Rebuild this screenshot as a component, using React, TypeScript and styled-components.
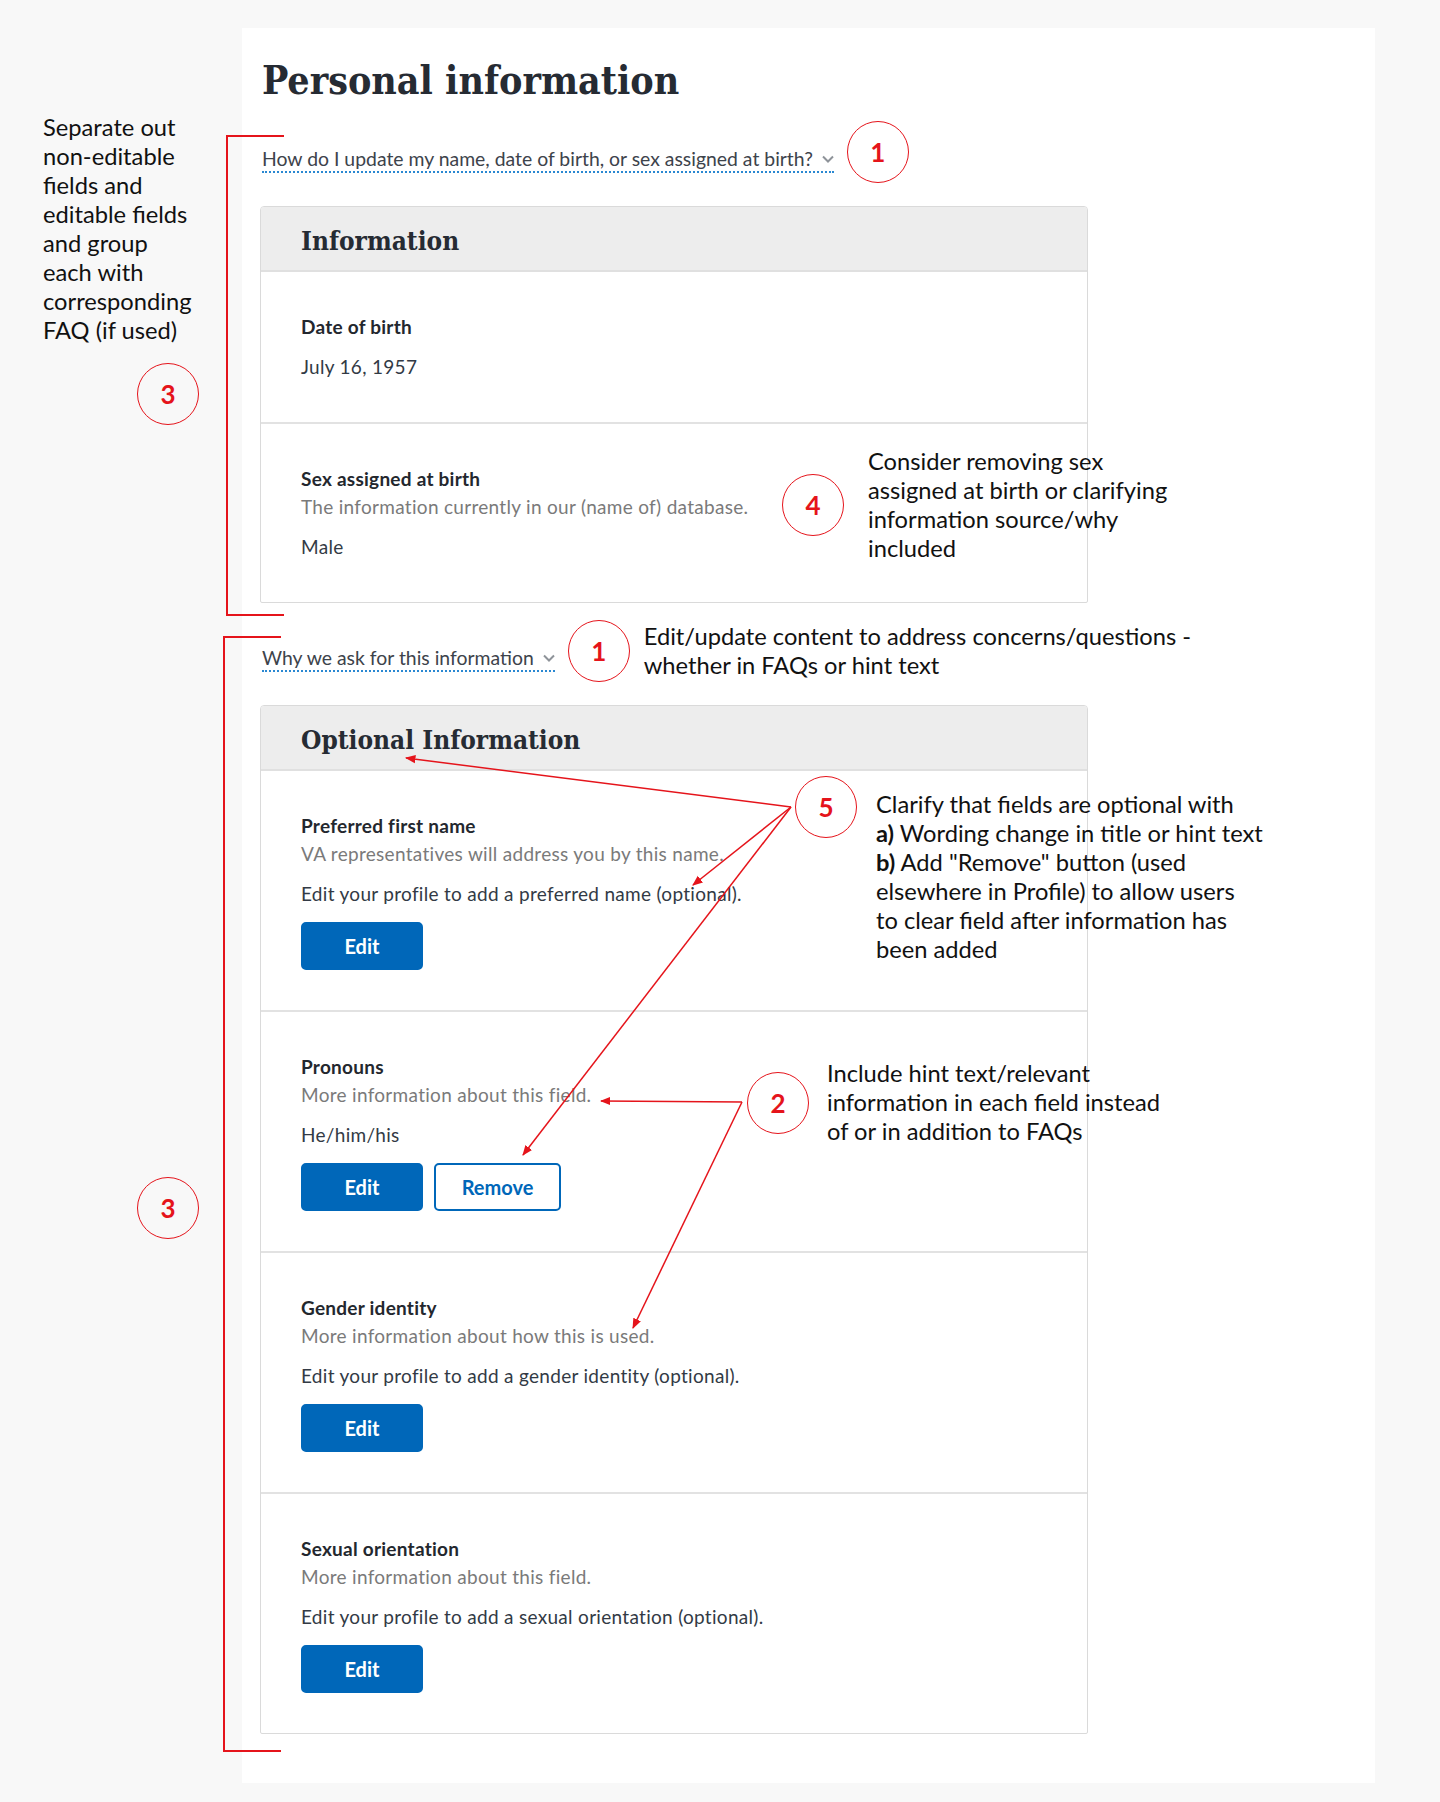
import React from "react";
import styled, { createGlobalStyle } from "styled-components";

const RED = "#e5141b";
const BLUE = "#0067b9";

const GlobalStyle = createGlobalStyle`
  html, body { margin: 0; padding: 0; background: #f8f8f8; }
  body { font-family: Lato, "Liberation Sans", sans-serif; -webkit-font-smoothing: antialiased; }
  * { box-sizing: border-box; }
`;

const Page = styled.div`
  position: relative;
  width: 1440px;
  height: 1802px;
  display: flex;
  align-items: flex-start;
  background: #f8f8f8;
  overflow: hidden;
`;

/* ---------- left margin notes ---------- */

const SideNote = styled.aside`
  width: 242px;
  display: flex;
  flex-direction: column;
  align-items: flex-start;
  padding: 113px 0 0 43px;
`;

const NoteText = styled.p`
  margin: 0;
  font: 400 23.7px/29px Lato, sans-serif;
  color: #111;
  white-space: nowrap;
  strong {
    font-weight: 700;
  }
`;

const Marker = styled.span<{ $offset?: number }>`
  flex: none;
  width: 62px;
  height: 62px;
  margin-top: ${(p) => p.$offset ?? 0}px;
  border: 1.5px solid ${RED};
  border-radius: 50%;
  display: flex;
  align-items: center;
  justify-content: center;
  font: 700 26px/1 Lato, sans-serif;
  color: ${RED};
`;

const SideMarker = styled(Marker)`
  margin-left: 94px;
`;

/* ---------- the page under review ---------- */

const Panel = styled.main`
  width: 1133px;
  height: 1755px;
  margin-top: 28px;
  background: #fff;
  padding: 28px 0 0 18px;
  display: flex;
  flex-direction: column;
  align-items: flex-start;
`;

const Title = styled.h1`
  margin: 0 0 0 2px;
  font-family: "DejaVu Serif Condensed", "DejaVu Serif", serif;
  font-stretch: condensed;
  font-weight: 700;
  font-size: 39px;
  line-height: 48px;
  color: #262b33;
`;

const DisclosureRow = styled.div`
  display: flex;
  align-items: flex-end;
  gap: 13px;
  margin: 17px 0 23px 2px;
`;

const Disclosure = styled.button`
  display: flex;
  align-items: center;
  gap: 9px;
  margin-bottom: 10px;
  padding: 0;
  border: 0;
  border-bottom: 2px dotted #2a88d2;
  background: none;
  font: 400 19.4px/24px Lato, sans-serif;
  color: #3d434b;
  cursor: pointer;
`;

const InlineNote = styled.div`
  display: flex;
  align-items: center;
  gap: 14px;
`;

const Chevron = () => (
  <svg width="12" height="8" viewBox="0 0 12 8" aria-hidden="true">
    <path d="M1 1.5 L6 6.5 L11 1.5" fill="none" stroke="#8e9399" strokeWidth="2" />
  </svg>
);

const Card = styled.section`
  width: 828px;
  display: flex;
  flex-direction: column;
  border: 1px solid #dadada;
  border-radius: 4px 4px 2px 2px;
  background: #fff;
  overflow: hidden;
`;

const CardHeader = styled.h2`
  margin: 0;
  height: 65px;
  padding: 18px 40px 0;
  background: #ededed;
  border-bottom: 2px solid #e0e0e0;
  font-family: "DejaVu Serif Condensed", "DejaVu Serif", serif;
  font-stretch: condensed;
  font-weight: 700;
  font-size: 26px;
  line-height: 32px;
  color: #262b33;
`;

const Row = styled.div`
  display: flex;
  flex-direction: column;
  align-items: flex-start;
  padding: 43px 40px 40px;
  & + & {
    border-top: 2px solid #e2e2e2;
  }
`;

const Label = styled.h3`
  margin: 0;
  font: 700 19px/24px Lato, sans-serif;
  letter-spacing: 0.25px;
  color: #23272e;
`;

const Hint = styled.p`
  margin: 4px 0 0;
  font: 400 19px/24px Lato, sans-serif;
  letter-spacing: 0.3px;
  color: #7a7a7a;
`;

const Value = styled.p`
  margin: 16px 0 3px;
  font: 400 19px/24px Lato, sans-serif;
  letter-spacing: 0.3px;
  color: #323a45;
`;

const Actions = styled.div`
  display: flex;
  gap: 11px;
  margin-top: 13px;
`;

const Button = styled.button<{ $secondary?: boolean }>`
  width: ${(p) => (p.$secondary ? "127px" : "122px")};
  height: 48px;
  padding: 0;
  border-radius: 5px;
  border: 2px solid ${BLUE};
  background: ${(p) => (p.$secondary ? "#fff" : BLUE)};
  color: ${(p) => (p.$secondary ? BLUE : "#fff")};
  font: 700 20px/1 Lato, sans-serif;
  cursor: pointer;
`;

/* ---------- review markup that lies over the page ---------- */

const Markup = styled.div`
  position: absolute;
  inset: 0;
  pointer-events: none;
`;

const FloatingNote = styled.div<{ $x: number; $y: number; $gap: number; $top?: boolean }>`
  position: absolute;
  left: ${(p) => p.$x}px;
  top: ${(p) => p.$y}px;
  display: flex;
  align-items: ${(p) => (p.$top ? "flex-start" : "center")};
  gap: ${(p) => p.$gap}px;
  ${NoteText} {
    margin-top: ${(p) => (p.$top ? "14px" : "0")};
  }
`;

const Bracket = styled.div<{ $x: number; $y: number; $h: number }>`
  position: absolute;
  left: ${(p) => p.$x}px;
  top: ${(p) => p.$y}px;
  width: 58px;
  height: ${(p) => p.$h}px;
  border: 2px solid ${RED};
  border-right: 0;
`;

const ArrowLayer = styled.svg`
  position: absolute;
  left: 0;
  top: 0;
`;

const arrows: [number, number, number, number][] = [
  [791, 807, 406, 758],
  [791, 807, 693, 885],
  [791, 807, 523, 1155],
  [742, 1102, 601, 1101],
  [742, 1102, 633, 1328],
];

type Field = {
  label: string;
  hint?: string;
  value: string;
  remove?: boolean;
};

const fixedFields: Field[] = [
  { label: "Date of birth", value: "July 16, 1957" },
  {
    label: "Sex assigned at birth",
    hint: "The information currently in our (name of) database.",
    value: "Male",
  },
];

const optionalFields: Field[] = [
  {
    label: "Preferred first name",
    hint: "VA representatives will address you by this name.",
    value: "Edit your profile to add a preferred name (optional).",
  },
  {
    label: "Pronouns",
    hint: "More information about this field.",
    value: "He/him/his",
    remove: true,
  },
  {
    label: "Gender identity",
    hint: "More information about how this is used.",
    value: "Edit your profile to add a gender identity (optional).",
  },
  {
    label: "Sexual orientation",
    hint: "More information about this field.",
    value: "Edit your profile to add a sexual orientation (optional).",
  },
];

const FieldRow = ({ f, editable }: { f: Field; editable?: boolean }) => (
  <Row>
    <Label>{f.label}</Label>
    {f.hint && <Hint>{f.hint}</Hint>}
    <Value>{f.value}</Value>
    {editable && (
      <Actions>
        <Button>Edit</Button>
        {f.remove && <Button $secondary>Remove</Button>}
      </Actions>
    )}
  </Row>
);

const lines = (text: string[]) =>
  text.map((t, i) => (
    <React.Fragment key={i}>
      {i > 0 && <br />}
      {t}
    </React.Fragment>
  ));

export default function App() {
  return (
    <>
      <GlobalStyle />
      <Page>
        <SideNote>
          <NoteText>
            {lines([
              "Separate out",
              "non-editable",
              "fields and",
              "editable fields",
              "and group",
              "each with",
              "corresponding",
              "FAQ (if used)",
            ])}
          </NoteText>
          <SideMarker $offset={18}>3</SideMarker>
          <SideMarker $offset={752}>3</SideMarker>
        </SideNote>

        <Panel>
          <Title>Personal information</Title>

          <DisclosureRow>
            <Disclosure>
              How do I update my name, date of birth, or sex assigned at birth?
              <Chevron />
            </Disclosure>
            <Marker>1</Marker>
          </DisclosureRow>

          <Card>
            <CardHeader>Information</CardHeader>
            {fixedFields.map((f) => (
              <FieldRow key={f.label} f={f} />
            ))}
          </Card>

          <DisclosureRow>
            <Disclosure>
              Why we ask for this information
              <Chevron />
            </Disclosure>
            <InlineNote>
              <Marker>1</Marker>
              <NoteText>
                {lines([
                  "Edit/update content to address concerns/questions -",
                  "whether in FAQs or hint text",
                ])}
              </NoteText>
            </InlineNote>
          </DisclosureRow>

          <Card>
            <CardHeader>Optional Information</CardHeader>
            {optionalFields.map((f) => (
              <FieldRow key={f.label} f={f} editable />
            ))}
          </Card>
        </Panel>

        <Markup>
          <Bracket $x={226} $y={135} $h={481} />
          <Bracket $x={223} $y={636} $h={1116} />

          <ArrowLayer width="1440" height="1802" viewBox="0 0 1440 1802">
            <defs>
              <marker
                id="head"
                viewBox="0 0 10 10"
                refX="9"
                refY="5"
                markerWidth="7"
                markerHeight="7"
                orient="auto"
              >
                <path d="M0 1 L10 5 L0 9 z" fill={RED} />
              </marker>
            </defs>
            {arrows.map(([x1, y1, x2, y2], i) => (
              <line
                key={i}
                x1={x1}
                y1={y1}
                x2={x2}
                y2={y2}
                stroke={RED}
                strokeWidth="1.5"
                markerEnd="url(#head)"
              />
            ))}
          </ArrowLayer>

          <FloatingNote $x={782} $y={447} $gap={24}>
            <Marker>4</Marker>
            <NoteText>
              {lines([
                "Consider removing sex",
                "assigned at birth or clarifying",
                "information source/why",
                "included",
              ])}
            </NoteText>
          </FloatingNote>

          <FloatingNote $x={795} $y={776} $gap={19} $top>
            <Marker>5</Marker>
            <NoteText>
              Clarify that fields are optional with
              <br />
              <strong>a)</strong> Wording change in title or hint text
              <br />
              <strong>b)</strong> Add "Remove" button (used
              <br />
              elsewhere in Profile) to allow users
              <br />
              to clear field after information has
              <br />
              been added
            </NoteText>
          </FloatingNote>

          <FloatingNote $x={747} $y={1059} $gap={18}>
            <Marker>2</Marker>
            <NoteText>
              {lines([
                "Include hint text/relevant",
                "information in each field instead",
                "of or in addition to FAQs",
              ])}
            </NoteText>
          </FloatingNote>
        </Markup>
      </Page>
    </>
  );
}
